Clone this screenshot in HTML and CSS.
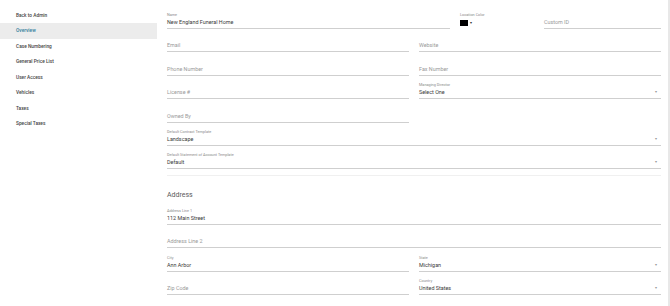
FILE: index.html
```html
<!DOCTYPE html>
<html lang="en">
<head>
    <meta charset="UTF-8">
    <meta name="viewport" content="width=device-width, initial-scale=1.0">
    <title>Location Settings</title>
    <link rel="stylesheet" href="styles.css">
</head>
<body>
    <div class="layout">
        <nav class="sidebar">
            <a class="nav-item">Back to Admin</a>
            <a class="nav-item active">Overview</a>
            <a class="nav-item">Case Numbering</a>
            <a class="nav-item">General Price List</a>
            <a class="nav-item">User Access</a>
            <a class="nav-item">Vehicles</a>
            <a class="nav-item">Taxes</a>
            <a class="nav-item">Special Taxes</a>
        </nav>

        <main class="content">
            <div class="row row-top">
                <div class="field">
                    <span class="label">Name</span>
                    <span class="value">New England Funeral Home</span>
                </div>
                <div class="color-field">
                    <span class="label">Location Color</span>
                    <div class="color-picker">
                        <span class="swatch"></span>
                        <span class="caret-dark">&#9662;</span>
                    </div>
                </div>
                <div class="field">
                    <span class="value placeholder">Custom ID</span>
                </div>
            </div>

            <div class="row">
                <div class="field"><span class="value placeholder">Email</span></div>
                <div class="field"><span class="value placeholder">Website</span></div>
            </div>

            <div class="row">
                <div class="field"><span class="value placeholder">Phone Number</span></div>
                <div class="field"><span class="value placeholder">Fax Number</span></div>
            </div>

            <div class="row">
                <div class="field"><span class="value placeholder">License #</span></div>
                <div class="field select">
                    <span class="label">Managing Director</span>
                    <span class="value">Select One</span>
                    <span class="caret">&#9662;</span>
                </div>
            </div>

            <div class="row">
                <div class="field"><span class="value placeholder">Owned By</span></div>
            </div>

            <div class="field select">
                <span class="label">Default Contract Template</span>
                <span class="value">Landscape</span>
                <span class="caret">&#9662;</span>
            </div>

            <div class="field select">
                <span class="label">Default Statement of Account Template</span>
                <span class="value">Default</span>
                <span class="caret">&#9662;</span>
            </div>

            <hr class="divider">

            <h2 class="section-title">Address</h2>

            <div class="field">
                <span class="label">Address Line 1</span>
                <span class="value">112 Main Street</span>
            </div>

            <div class="field">
                <span class="value placeholder">Address Line 2</span>
            </div>

            <div class="row">
                <div class="field">
                    <span class="label">City</span>
                    <span class="value">Ann Arbor</span>
                </div>
                <div class="field select">
                    <span class="label">State</span>
                    <span class="value">Michigan</span>
                    <span class="caret">&#9662;</span>
                </div>
            </div>

            <div class="row">
                <div class="field"><span class="value placeholder">Zip Code</span></div>
                <div class="field select">
                    <span class="label">Country</span>
                    <span class="value">United States</span>
                    <span class="caret">&#9662;</span>
                </div>
            </div>
        </main>
    </div>
</body>
</html>
```

FILE: styles.css
```css
body {
    margin: 0;
    font-family: Roboto, "Liberation Sans", Arial, sans-serif;
    background-color: #fff;
    color: #333;
}
.layout {
    display: flex;
    height: 306px;
    overflow: hidden;
}
.sidebar {
    width: 157px;
    flex-shrink: 0;
    padding-top: 7.5px;
}
.nav-item {
    display: flex;
    align-items: center;
    height: 15.5px;
    padding-left: 16px;
    font-size: 4.8px;
    font-weight: 500;
    color: #444;
}
.nav-item.active {
    background-color: #ececec;
    color: #2f7d9c;
}
.content {
    width: 494px;
    padding: 11px 7px 0 10px;
    border-right: 2px solid #e8e8e8;
}
.row {
    display: grid;
    grid-template-columns: 1fr 1fr;
    column-gap: 10px;
}
.row-top {
    grid-template-columns: 283px 74px 117px;
}
.field {
    position: relative;
    display: flex;
    flex-direction: column;
    justify-content: flex-end;
    height: 18px;
    padding-bottom: 2px;
    box-sizing: border-box;
    border-bottom: 1px solid #cfcfcf;
    margin-bottom: 5.4px;
}
.label {
    font-size: 3.8px;
    line-height: 6px;
    color: #8a8a8a;
}
.value {
    font-size: 5.4px;
    line-height: 8px;
    color: #3a3a3a;
}
.value.placeholder {
    color: #9a9a9a;
}
.caret {
    position: absolute;
    right: 4px;
    bottom: 3px;
    font-size: 3.5px;
    line-height: 6px;
    color: #999;
}
.color-field {
    display: flex;
    flex-direction: column;
    padding-top: 1px;
}
.color-picker {
    display: flex;
    align-items: center;
    gap: 2px;
    margin-top: 1.5px;
}
.swatch {
    width: 8px;
    height: 6px;
    background-color: #000;
}
.caret-dark {
    font-size: 4px;
    color: #333;
}
.divider {
    border: none;
    border-top: 1px solid #f0f0f0;
    margin: 3.6px 0 0;
}
.section-title {
    margin: 14.5px 0 6.5px;
    font-size: 7px;
    line-height: 10px;
    font-weight: 400;
    color: #5a5a5a;
}
```
